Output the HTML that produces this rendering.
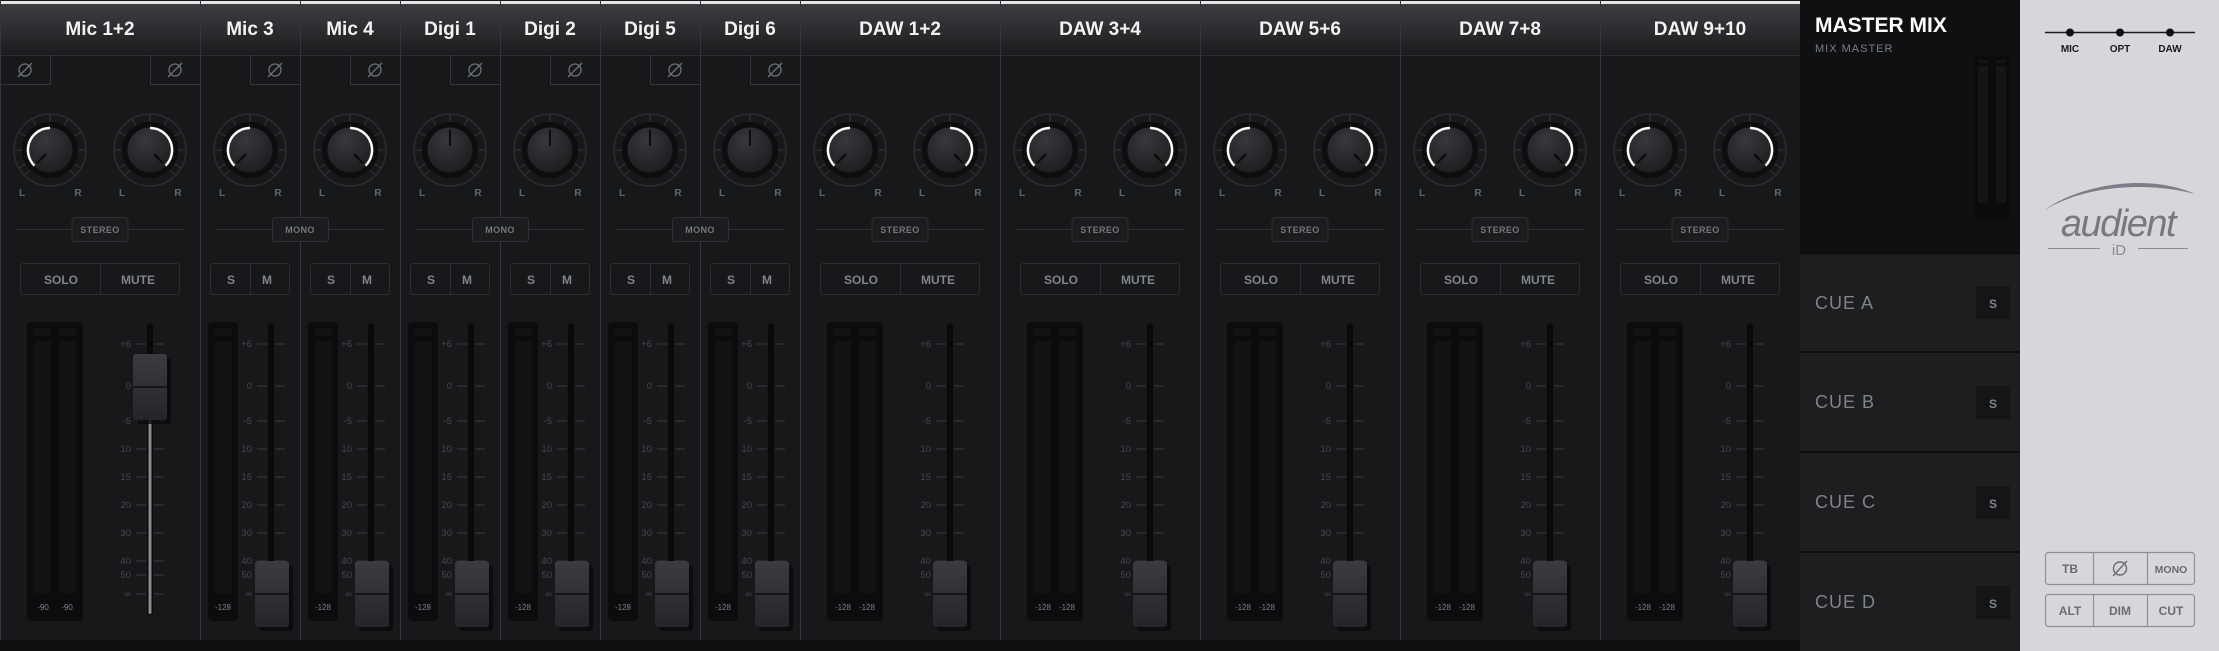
<!DOCTYPE html>
<html><head><meta charset="utf-8"><style>
html,body{margin:0;padding:0;background:#d6d7db;width:2219px;height:651px;overflow:hidden}
svg{display:block}
text{font-family:"Liberation Sans Narrow","Liberation Sans",sans-serif;font-weight:bold}
.t{fill:#f2f2f2;font-size:19px;text-anchor:middle}
.lr{fill:#5f6670;font-size:10px;text-anchor:middle}
.pl{fill:#74777c;font-size:9px;text-anchor:middle;letter-spacing:.4px}
.sm{fill:#80838a;font-size:12px;text-anchor:middle}
.sc{fill:#45484e;font-size:9.5px;text-anchor:end;font-weight:normal}
.ml{fill:#7d8088;font-size:8px;text-anchor:middle;font-weight:normal}
.cue{fill:#7f8287;font-size:18px;font-weight:normal;letter-spacing:1px}
</style></head><body>
<svg width="2219" height="651" viewBox="0 0 2219 651" xmlns="http://www.w3.org/2000/svg">
<defs>
<linearGradient id="hg" x1="0" y1="0" x2="0" y2="1"><stop offset="0" stop-color="#3d3e41"/><stop offset="1" stop-color="#1b1c1e"/></linearGradient>
<radialGradient id="kg" cx=".4" cy=".3" r=".8"><stop offset="0" stop-color="#37383b"/><stop offset="1" stop-color="#1a1b1d"/></radialGradient>
<linearGradient id="cg" x1="0" y1="0" x2="0" y2="1"><stop offset="0" stop-color="#3b3c3f"/><stop offset="1" stop-color="#242528"/></linearGradient>
<g id="kb">
<circle r="36" fill="#17181a" stroke="#2b2c2f" stroke-width="1.5"/>
<path d="M0-36v9M18-31.2l-4.5 7.8M31.2-18l-7.8 4.5M36 0h-9M31.2 18l-7.8-4.5M-18-31.2l4.5 7.8M-31.2-18l7.8 4.5M-36 0h9M-31.2 18l7.8-4.5M-25.5 25.5l6-6M25.5 25.5l-6-6" stroke="#2b2c2f" stroke-width="1.5"/>
<circle r="28" fill="#0c0d0e"/>
<circle r="22.5" fill="url(#kg)"/>
</g>
<g id="kL"><use href="#kb"/><path d="M-15.6 15.6A22 22 0 0 1 0-22" stroke="#fff" stroke-width="2.5" fill="none"/><path d="M-4 4L-13 13" stroke="#0a0a0a" stroke-width="2"/></g>
<g id="kR"><use href="#kb"/><path d="M0-22A22 22 0 0 1 15.6 15.6" stroke="#fff" stroke-width="2.5" fill="none"/><path d="M4 4L13 13" stroke="#0a0a0a" stroke-width="2"/></g>
<g id="kC"><use href="#kb"/><path d="M0 -4V-20" stroke="#0a0a0a" stroke-width="2"/></g>
<g id="ph"><circle r="6" fill="none" stroke="#6d7075" stroke-width="1.3"/><path d="M-7 7L7-7" stroke="#6d7075" stroke-width="1.3"/></g>
<g id="mS"><rect x="27" y="322" width="56" height="299" rx="4" fill="#0b0c0d"/><rect x="34" y="328" width="17" height="265" fill="#111214"/><rect x="59" y="328" width="17" height="265" fill="#111214"/><rect x="34" y="336" width="42" height="5" fill="#0b0c0d"/></g>
<g id="mM"><rect x="8" y="322" width="30" height="299" rx="4" fill="#0b0c0d"/><rect x="15" y="328" width="17" height="265" fill="#111214"/><rect x="15" y="336" width="17" height="5" fill="#0b0c0d"/></g>
<path id="tk" d="M0 344h10m8 0h10M0 386h10m8 0h10M0 421h10m8 0h10M0 449h10m8 0h10M0 477h10m8 0h10M0 505h10m8 0h10M0 533h10m8 0h10M0 561h10m8 0h10M0 575h10m8 0h10M0 594h10m8 0h10" stroke="#383a3e" stroke-width="1"/>
<g id="cap"><rect x="4" y="4" width="34" height="66" rx="3" fill="#0a0a0b" opacity=".8"/><rect width="34" height="66" rx="3" fill="url(#cg)"/><rect y="32" width="34" height="2" fill="#151618"/></g>
</defs>
<rect x="0" y="0" width="1800" height="651" fill="#0e0f10"/>
<rect x="0" y="0" width="1800" height="640" fill="#17181a"/>
<rect x="0" y="4" width="1800" height="51" fill="url(#hg)"/>
<rect x="0" y="1" width="1800" height="3" fill="#e6e6e6"/>
<path d="M0 55.5H1800" stroke="#2e2f32"/>
<path d="M200.5 0V640M300.5 0V640M400.5 0V640M500.5 0V640M600.5 0V640M700.5 0V640M800.5 0V640M1000.5 0V640M1200.5 0V640M1400.5 0V640M1600.5 0V640M0.5 0V640" stroke="#34363a"/>

<!-- Mic 1+2 -->
<g>
<text x="100" y="35" class="t">Mic 1+2</text>
<path d="M0 84.5H50.5V55M200 84.5H150.5V55" stroke="#34363a" fill="none"/>
<use href="#ph" x="25" y="70"/><use href="#ph" x="175" y="70"/>
<use href="#kL" x="50" y="150"/><use href="#kR" x="150" y="150"/>
<text class="lr"><tspan x="22" y="196">L</tspan><tspan x="78" y="196">R</tspan><tspan x="122" y="196">L</tspan><tspan x="178" y="196">R</tspan></text>
<path d="M16 229.5H184" stroke="#2e3033"/><rect x="72" y="217.5" width="56" height="24" rx="3" fill="#1b1c1e" stroke="#2e3033"/><text x="100" y="233" class="pl">STEREO</text>
<rect x="20.5" y="263.5" width="159" height="31" rx="3" fill="none" stroke="#2c2e31"/><path d="M100.5 264V294" stroke="#2c2e31"/><text class="sm"><tspan x="61" y="284">SOLO</tspan><tspan x="138" y="284">MUTE</tspan></text>
<use href="#mS"/><text class="ml"><tspan x="43" y="610">-90</tspan><tspan x="67" y="610">-90</tspan></text>
<use href="#tk" x="136"/><rect x="147" y="323" width="6" height="292" rx="3" fill="#0a0a0b"/><rect x="148.5" y="420" width="3" height="194" rx="1.5" fill="#8a8b8e"/>
<text class="sc"><tspan x="131" y="347">+6</tspan><tspan x="131" y="389">0</tspan><tspan x="131" y="424">-5</tspan><tspan x="131" y="452">10</tspan><tspan x="131" y="480">15</tspan><tspan x="131" y="508">20</tspan><tspan x="131" y="536">30</tspan><tspan x="131" y="564">40</tspan><tspan x="131" y="578">50</tspan><tspan x="131" y="597">∞</tspan></text>
<use href="#cap" x="133" y="354"/>
</g>

<!-- mono channels -->
<g transform="translate(200,0)"><text x="50" y="35" class="t">Mic 3</text><path d="M100 84.5H50.5V55" stroke="#34363a" fill="none"/><use href="#ph" x="75" y="70"/><use href="#kL" x="50" y="150"/><text class="lr"><tspan x="22" y="196">L</tspan><tspan x="78" y="196">R</tspan></text>
<rect x="10.5" y="263.5" width="79" height="31" rx="3" fill="none" stroke="#2c2e31"/><path d="M50.5 264V294" stroke="#2c2e31"/><text class="sm"><tspan x="31" y="284">S</tspan><tspan x="67" y="284">M</tspan></text>
<use href="#mM"/><text x="23" y="610" class="ml">-128</text><use href="#tk" x="57"/><rect x="68" y="323" width="6" height="292" rx="3" fill="#0a0a0b"/>
<text class="sc"><tspan x="52" y="347">+6</tspan><tspan x="52" y="389">0</tspan><tspan x="52" y="424">-5</tspan><tspan x="52" y="452">10</tspan><tspan x="52" y="480">15</tspan><tspan x="52" y="508">20</tspan><tspan x="52" y="536">30</tspan><tspan x="52" y="564">40</tspan><tspan x="52" y="578">50</tspan><tspan x="52" y="597">∞</tspan></text><use href="#cap" x="55" y="561"/></g>

<g transform="translate(300,0)"><text x="50" y="35" class="t">Mic 4</text><path d="M100 84.5H50.5V55" stroke="#34363a" fill="none"/><use href="#ph" x="75" y="70"/><use href="#kR" x="50" y="150"/><text class="lr"><tspan x="22" y="196">L</tspan><tspan x="78" y="196">R</tspan></text>
<rect x="10.5" y="263.5" width="79" height="31" rx="3" fill="none" stroke="#2c2e31"/><path d="M50.5 264V294" stroke="#2c2e31"/><text class="sm"><tspan x="31" y="284">S</tspan><tspan x="67" y="284">M</tspan></text>
<use href="#mM"/><text x="23" y="610" class="ml">-128</text><use href="#tk" x="57"/><rect x="68" y="323" width="6" height="292" rx="3" fill="#0a0a0b"/>
<text class="sc"><tspan x="52" y="347">+6</tspan><tspan x="52" y="389">0</tspan><tspan x="52" y="424">-5</tspan><tspan x="52" y="452">10</tspan><tspan x="52" y="480">15</tspan><tspan x="52" y="508">20</tspan><tspan x="52" y="536">30</tspan><tspan x="52" y="564">40</tspan><tspan x="52" y="578">50</tspan><tspan x="52" y="597">∞</tspan></text><use href="#cap" x="55" y="561"/></g>

<g transform="translate(400,0)"><text x="50" y="35" class="t">Digi 1</text><path d="M100 84.5H50.5V55" stroke="#34363a" fill="none"/><use href="#ph" x="75" y="70"/><use href="#kC" x="50" y="150"/><text class="lr"><tspan x="22" y="196">L</tspan><tspan x="78" y="196">R</tspan></text>
<rect x="10.5" y="263.5" width="79" height="31" rx="3" fill="none" stroke="#2c2e31"/><path d="M50.5 264V294" stroke="#2c2e31"/><text class="sm"><tspan x="31" y="284">S</tspan><tspan x="67" y="284">M</tspan></text>
<use href="#mM"/><text x="23" y="610" class="ml">-128</text><use href="#tk" x="57"/><rect x="68" y="323" width="6" height="292" rx="3" fill="#0a0a0b"/>
<text class="sc"><tspan x="52" y="347">+6</tspan><tspan x="52" y="389">0</tspan><tspan x="52" y="424">-5</tspan><tspan x="52" y="452">10</tspan><tspan x="52" y="480">15</tspan><tspan x="52" y="508">20</tspan><tspan x="52" y="536">30</tspan><tspan x="52" y="564">40</tspan><tspan x="52" y="578">50</tspan><tspan x="52" y="597">∞</tspan></text><use href="#cap" x="55" y="561"/></g>

<g transform="translate(500,0)"><text x="50" y="35" class="t">Digi 2</text><path d="M100 84.5H50.5V55" stroke="#34363a" fill="none"/><use href="#ph" x="75" y="70"/><use href="#kC" x="50" y="150"/><text class="lr"><tspan x="22" y="196">L</tspan><tspan x="78" y="196">R</tspan></text>
<rect x="10.5" y="263.5" width="79" height="31" rx="3" fill="none" stroke="#2c2e31"/><path d="M50.5 264V294" stroke="#2c2e31"/><text class="sm"><tspan x="31" y="284">S</tspan><tspan x="67" y="284">M</tspan></text>
<use href="#mM"/><text x="23" y="610" class="ml">-128</text><use href="#tk" x="57"/><rect x="68" y="323" width="6" height="292" rx="3" fill="#0a0a0b"/>
<text class="sc"><tspan x="52" y="347">+6</tspan><tspan x="52" y="389">0</tspan><tspan x="52" y="424">-5</tspan><tspan x="52" y="452">10</tspan><tspan x="52" y="480">15</tspan><tspan x="52" y="508">20</tspan><tspan x="52" y="536">30</tspan><tspan x="52" y="564">40</tspan><tspan x="52" y="578">50</tspan><tspan x="52" y="597">∞</tspan></text><use href="#cap" x="55" y="561"/></g>

<g transform="translate(600,0)"><text x="50" y="35" class="t">Digi 5</text><path d="M100 84.5H50.5V55" stroke="#34363a" fill="none"/><use href="#ph" x="75" y="70"/><use href="#kC" x="50" y="150"/><text class="lr"><tspan x="22" y="196">L</tspan><tspan x="78" y="196">R</tspan></text>
<rect x="10.5" y="263.5" width="79" height="31" rx="3" fill="none" stroke="#2c2e31"/><path d="M50.5 264V294" stroke="#2c2e31"/><text class="sm"><tspan x="31" y="284">S</tspan><tspan x="67" y="284">M</tspan></text>
<use href="#mM"/><text x="23" y="610" class="ml">-128</text><use href="#tk" x="57"/><rect x="68" y="323" width="6" height="292" rx="3" fill="#0a0a0b"/>
<text class="sc"><tspan x="52" y="347">+6</tspan><tspan x="52" y="389">0</tspan><tspan x="52" y="424">-5</tspan><tspan x="52" y="452">10</tspan><tspan x="52" y="480">15</tspan><tspan x="52" y="508">20</tspan><tspan x="52" y="536">30</tspan><tspan x="52" y="564">40</tspan><tspan x="52" y="578">50</tspan><tspan x="52" y="597">∞</tspan></text><use href="#cap" x="55" y="561"/></g>

<g transform="translate(700,0)"><text x="50" y="35" class="t">Digi 6</text><path d="M100 84.5H50.5V55" stroke="#34363a" fill="none"/><use href="#ph" x="75" y="70"/><use href="#kC" x="50" y="150"/><text class="lr"><tspan x="22" y="196">L</tspan><tspan x="78" y="196">R</tspan></text>
<rect x="10.5" y="263.5" width="79" height="31" rx="3" fill="none" stroke="#2c2e31"/><path d="M50.5 264V294" stroke="#2c2e31"/><text class="sm"><tspan x="31" y="284">S</tspan><tspan x="67" y="284">M</tspan></text>
<use href="#mM"/><text x="23" y="610" class="ml">-128</text><use href="#tk" x="57"/><rect x="68" y="323" width="6" height="292" rx="3" fill="#0a0a0b"/>
<text class="sc"><tspan x="52" y="347">+6</tspan><tspan x="52" y="389">0</tspan><tspan x="52" y="424">-5</tspan><tspan x="52" y="452">10</tspan><tspan x="52" y="480">15</tspan><tspan x="52" y="508">20</tspan><tspan x="52" y="536">30</tspan><tspan x="52" y="564">40</tspan><tspan x="52" y="578">50</tspan><tspan x="52" y="597">∞</tspan></text><use href="#cap" x="55" y="561"/></g>

<!-- mono pills -->
<path d="M216 229.5H384M416 229.5H584M616 229.5H784" stroke="#2e3033"/>
<rect x="272.5" y="217.5" width="56" height="24" rx="3" fill="#1b1c1e" stroke="#2e3033"/><text x="300" y="233" class="pl">MONO</text>
<rect x="472.5" y="217.5" width="56" height="24" rx="3" fill="#1b1c1e" stroke="#2e3033"/><text x="500" y="233" class="pl">MONO</text>
<rect x="672.5" y="217.5" width="56" height="24" rx="3" fill="#1b1c1e" stroke="#2e3033"/><text x="700" y="233" class="pl">MONO</text>

<!-- DAW stereo channels -->
<g transform="translate(800,0)"><text x="100" y="35" class="t">DAW 1+2</text>
<use href="#kL" x="50" y="150"/><use href="#kR" x="150" y="150"/><text class="lr"><tspan x="22" y="196">L</tspan><tspan x="78" y="196">R</tspan><tspan x="122" y="196">L</tspan><tspan x="178" y="196">R</tspan></text>
<path d="M16 229.5H184" stroke="#2e3033"/><rect x="72" y="217.5" width="56" height="24" rx="3" fill="#1b1c1e" stroke="#2e3033"/><text x="100" y="233" class="pl">STEREO</text>
<rect x="20.5" y="263.5" width="159" height="31" rx="3" fill="none" stroke="#2c2e31"/><path d="M100.5 264V294" stroke="#2c2e31"/><text class="sm"><tspan x="61" y="284">SOLO</tspan><tspan x="138" y="284">MUTE</tspan></text>
<use href="#mS"/><text class="ml"><tspan x="43" y="610">-128</tspan><tspan x="67" y="610">-128</tspan></text>
<use href="#tk" x="136"/><rect x="147" y="323" width="6" height="292" rx="3" fill="#0a0a0b"/>
<text class="sc"><tspan x="131" y="347">+6</tspan><tspan x="131" y="389">0</tspan><tspan x="131" y="424">-5</tspan><tspan x="131" y="452">10</tspan><tspan x="131" y="480">15</tspan><tspan x="131" y="508">20</tspan><tspan x="131" y="536">30</tspan><tspan x="131" y="564">40</tspan><tspan x="131" y="578">50</tspan><tspan x="131" y="597">∞</tspan></text><use href="#cap" x="133" y="561"/></g>

<g transform="translate(1000,0)"><text x="100" y="35" class="t">DAW 3+4</text>
<use href="#kL" x="50" y="150"/><use href="#kR" x="150" y="150"/><text class="lr"><tspan x="22" y="196">L</tspan><tspan x="78" y="196">R</tspan><tspan x="122" y="196">L</tspan><tspan x="178" y="196">R</tspan></text>
<path d="M16 229.5H184" stroke="#2e3033"/><rect x="72" y="217.5" width="56" height="24" rx="3" fill="#1b1c1e" stroke="#2e3033"/><text x="100" y="233" class="pl">STEREO</text>
<rect x="20.5" y="263.5" width="159" height="31" rx="3" fill="none" stroke="#2c2e31"/><path d="M100.5 264V294" stroke="#2c2e31"/><text class="sm"><tspan x="61" y="284">SOLO</tspan><tspan x="138" y="284">MUTE</tspan></text>
<use href="#mS"/><text class="ml"><tspan x="43" y="610">-128</tspan><tspan x="67" y="610">-128</tspan></text>
<use href="#tk" x="136"/><rect x="147" y="323" width="6" height="292" rx="3" fill="#0a0a0b"/>
<text class="sc"><tspan x="131" y="347">+6</tspan><tspan x="131" y="389">0</tspan><tspan x="131" y="424">-5</tspan><tspan x="131" y="452">10</tspan><tspan x="131" y="480">15</tspan><tspan x="131" y="508">20</tspan><tspan x="131" y="536">30</tspan><tspan x="131" y="564">40</tspan><tspan x="131" y="578">50</tspan><tspan x="131" y="597">∞</tspan></text><use href="#cap" x="133" y="561"/></g>

<g transform="translate(1200,0)"><text x="100" y="35" class="t">DAW 5+6</text>
<use href="#kL" x="50" y="150"/><use href="#kR" x="150" y="150"/><text class="lr"><tspan x="22" y="196">L</tspan><tspan x="78" y="196">R</tspan><tspan x="122" y="196">L</tspan><tspan x="178" y="196">R</tspan></text>
<path d="M16 229.5H184" stroke="#2e3033"/><rect x="72" y="217.5" width="56" height="24" rx="3" fill="#1b1c1e" stroke="#2e3033"/><text x="100" y="233" class="pl">STEREO</text>
<rect x="20.5" y="263.5" width="159" height="31" rx="3" fill="none" stroke="#2c2e31"/><path d="M100.5 264V294" stroke="#2c2e31"/><text class="sm"><tspan x="61" y="284">SOLO</tspan><tspan x="138" y="284">MUTE</tspan></text>
<use href="#mS"/><text class="ml"><tspan x="43" y="610">-128</tspan><tspan x="67" y="610">-128</tspan></text>
<use href="#tk" x="136"/><rect x="147" y="323" width="6" height="292" rx="3" fill="#0a0a0b"/>
<text class="sc"><tspan x="131" y="347">+6</tspan><tspan x="131" y="389">0</tspan><tspan x="131" y="424">-5</tspan><tspan x="131" y="452">10</tspan><tspan x="131" y="480">15</tspan><tspan x="131" y="508">20</tspan><tspan x="131" y="536">30</tspan><tspan x="131" y="564">40</tspan><tspan x="131" y="578">50</tspan><tspan x="131" y="597">∞</tspan></text><use href="#cap" x="133" y="561"/></g>

<g transform="translate(1400,0)"><text x="100" y="35" class="t">DAW 7+8</text>
<use href="#kL" x="50" y="150"/><use href="#kR" x="150" y="150"/><text class="lr"><tspan x="22" y="196">L</tspan><tspan x="78" y="196">R</tspan><tspan x="122" y="196">L</tspan><tspan x="178" y="196">R</tspan></text>
<path d="M16 229.5H184" stroke="#2e3033"/><rect x="72" y="217.5" width="56" height="24" rx="3" fill="#1b1c1e" stroke="#2e3033"/><text x="100" y="233" class="pl">STEREO</text>
<rect x="20.5" y="263.5" width="159" height="31" rx="3" fill="none" stroke="#2c2e31"/><path d="M100.5 264V294" stroke="#2c2e31"/><text class="sm"><tspan x="61" y="284">SOLO</tspan><tspan x="138" y="284">MUTE</tspan></text>
<use href="#mS"/><text class="ml"><tspan x="43" y="610">-128</tspan><tspan x="67" y="610">-128</tspan></text>
<use href="#tk" x="136"/><rect x="147" y="323" width="6" height="292" rx="3" fill="#0a0a0b"/>
<text class="sc"><tspan x="131" y="347">+6</tspan><tspan x="131" y="389">0</tspan><tspan x="131" y="424">-5</tspan><tspan x="131" y="452">10</tspan><tspan x="131" y="480">15</tspan><tspan x="131" y="508">20</tspan><tspan x="131" y="536">30</tspan><tspan x="131" y="564">40</tspan><tspan x="131" y="578">50</tspan><tspan x="131" y="597">∞</tspan></text><use href="#cap" x="133" y="561"/></g>

<g transform="translate(1600,0)"><text x="100" y="35" class="t">DAW 9+10</text>
<use href="#kL" x="50" y="150"/><use href="#kR" x="150" y="150"/><text class="lr"><tspan x="22" y="196">L</tspan><tspan x="78" y="196">R</tspan><tspan x="122" y="196">L</tspan><tspan x="178" y="196">R</tspan></text>
<path d="M16 229.5H184" stroke="#2e3033"/><rect x="72" y="217.5" width="56" height="24" rx="3" fill="#1b1c1e" stroke="#2e3033"/><text x="100" y="233" class="pl">STEREO</text>
<rect x="20.5" y="263.5" width="159" height="31" rx="3" fill="none" stroke="#2c2e31"/><path d="M100.5 264V294" stroke="#2c2e31"/><text class="sm"><tspan x="61" y="284">SOLO</tspan><tspan x="138" y="284">MUTE</tspan></text>
<use href="#mS"/><text class="ml"><tspan x="43" y="610">-128</tspan><tspan x="67" y="610">-128</tspan></text>
<use href="#tk" x="136"/><rect x="147" y="323" width="6" height="292" rx="3" fill="#0a0a0b"/>
<text class="sc"><tspan x="131" y="347">+6</tspan><tspan x="131" y="389">0</tspan><tspan x="131" y="424">-5</tspan><tspan x="131" y="452">10</tspan><tspan x="131" y="480">15</tspan><tspan x="131" y="508">20</tspan><tspan x="131" y="536">30</tspan><tspan x="131" y="564">40</tspan><tspan x="131" y="578">50</tspan><tspan x="131" y="597">∞</tspan></text><use href="#cap" x="133" y="561"/></g>

<!-- Master -->
<rect x="1800" y="0" width="220" height="651" fill="#1d1e20"/>
<rect x="1800" y="0" width="220" height="253" fill="#0f1012"/>
<text x="1815" y="32" fill="#fff" font-size="21">MASTER MIX</text>
<text x="1815" y="52" fill="#7a7d82" font-size="11" style="font-weight:normal;letter-spacing:1px">MIX MASTER</text>
<rect x="1974" y="56" width="36" height="163" fill="#0b0b0c"/><rect x="1978" y="60" width="10" height="143" fill="#141517"/><rect x="1996" y="60" width="10" height="143" fill="#141517"/><rect x="1978" y="63" width="28" height="3" fill="#0b0b0c"/>
<path d="M1800 253.5H2020M1800 352H2020M1800 452H2020M1800 552H2020" stroke="#0c0d0e" stroke-width="2"/>
<text x="1815" y="309" class="cue">CUE A</text><text x="1815" y="408" class="cue">CUE B</text><text x="1815" y="508" class="cue">CUE C</text><text x="1815" y="608" class="cue">CUE D</text>
<g fill="#141517"><rect x="1976" y="286" width="34" height="33"/><rect x="1976" y="386" width="34" height="33"/><rect x="1976" y="486" width="34" height="33"/><rect x="1976" y="586" width="34" height="33"/></g>
<text x="1993" y="308" class="sm">S</text><text x="1993" y="408" class="sm">S</text><text x="1993" y="508" class="sm">S</text><text x="1993" y="608" class="sm">S</text>

<!-- right panel -->
<rect x="2020" y="0" width="199" height="651" fill="#d6d7db"/>
<path d="M2045 32.5H2195" stroke="#1a1a1a" stroke-width="1.5"/>
<circle cx="2070" cy="32.5" r="4" fill="#111"/><circle cx="2120" cy="32.5" r="4" fill="#111"/><circle cx="2170" cy="32.5" r="4" fill="#111"/>
<g fill="#1a1a1a" font-size="10" text-anchor="middle"><text x="2070" y="52">MIC</text><text x="2120" y="52">OPT</text><text x="2170" y="52">DAW</text></g>
<path d="M2045 210C2070 190 2140 170 2195 194C2140 180 2080 188 2045 210Z" fill="#7d7e88"/>
<text x="2118" y="236" fill="#78797f" font-size="38" text-anchor="middle" style="font-family:'Liberation Sans',sans-serif;font-weight:normal;font-style:italic;letter-spacing:-1.5px">audient</text>
<path d="M2048 248.5H2100M2138 248.5H2188" stroke="#8a8b91"/>
<text x="2119" y="255" fill="#8a8b91" font-size="15" text-anchor="middle" style="font-family:'Liberation Sans',sans-serif;font-weight:normal">iD</text>
<g fill="none" stroke="#8e9096" stroke-width="1.2">
<rect x="2045.5" y="552.5" width="149" height="32" rx="3"/><path d="M2093.5 553V584M2147.5 553V584"/>
<rect x="2045.5" y="594.5" width="149" height="32" rx="3"/><path d="M2093.5 595V626M2147.5 595V626"/>
</g>
<g fill="#6a6c72" font-size="12" text-anchor="middle">
<text x="2070" y="573">TB</text><text x="2171" y="573" font-size="10.5">MONO</text>
<text x="2070" y="615">ALT</text><text x="2120" y="615">DIM</text><text x="2171" y="615">CUT</text></g>
<circle cx="2120" cy="568.5" r="6.5" fill="none" stroke="#6a6c72" stroke-width="1.4"/><path d="M2113 576L2127 561" stroke="#6a6c72" stroke-width="1.4"/>
</svg>
</body></html>
